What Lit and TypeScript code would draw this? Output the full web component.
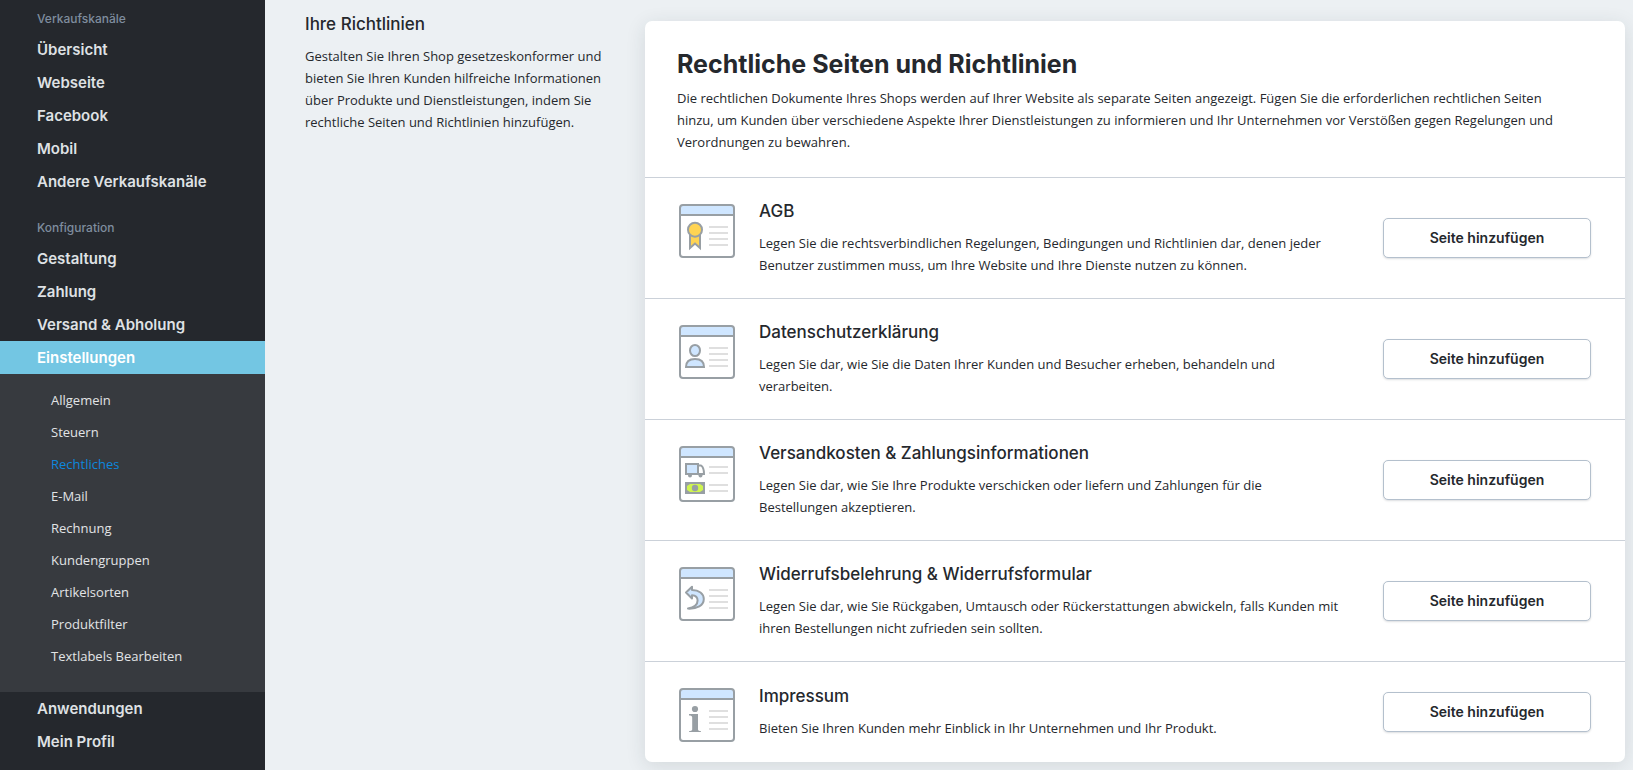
import { LitElement, html, css, svg, nothing } from "lit";
import { customElement, property } from "lit/decorators.js";
import { classMap } from "lit/directives/class-map.js";

type IconName = "terms" | "privacy" | "shipping" | "returns" | "imprint";

interface Policy {
  icon: IconName;
  title: string;
  text: string;
}

const CHANNELS = ["Übersicht", "Webseite", "Facebook", "Mobil", "Andere Verkaufskanäle"];
const CONFIG = ["Gestaltung", "Zahlung", "Versand & Abholung", "Einstellungen"];
const SETTINGS = [
  "Allgemein",
  "Steuern",
  "Rechtliches",
  "E-Mail",
  "Rechnung",
  "Kundengruppen",
  "Artikelsorten",
  "Produktfilter",
  "Textlabels Bearbeiten",
];
const ACCOUNT = ["Anwendungen", "Mein Profil"];

const POLICIES: Policy[] = [
  {
    icon: "terms",
    title: "AGB",
    text: "Legen Sie die rechtsverbindlichen Regelungen, Bedingungen und Richtlinien dar, denen jeder Benutzer zustimmen muss, um Ihre Website und Ihre Dienste nutzen zu können.",
  },
  {
    icon: "privacy",
    title: "Datenschutzerklärung",
    text: "Legen Sie dar, wie Sie die Daten Ihrer Kunden und Besucher erheben, behandeln und verarbeiten.",
  },
  {
    icon: "shipping",
    title: "Versandkosten & Zahlungsinformationen",
    text: "Legen Sie dar, wie Sie Ihre Produkte verschicken oder liefern und Zahlungen für die Bestellungen akzeptieren.",
  },
  {
    icon: "returns",
    title: "Widerrufsbelehrung & Widerrufsformular",
    text: "Legen Sie dar, wie Sie Rückgaben, Umtausch oder Rückerstattungen abwickeln, falls Kunden mit ihren Bestellungen nicht zufrieden sein sollten.",
  },
  {
    icon: "imprint",
    title: "Impressum",
    text: "Bieten Sie Ihren Kunden mehr Einblick in Ihr Unternehmen und Ihr Produkt.",
  },
];

@customElement("policy-icon")
export class PolicyIcon extends LitElement {
  @property() name: IconName = "terms";

  static styles = css`
    :host {
      display: block;
      width: 60px;
      height: 56px;
    }
    svg {
      display: block;
      width: 60px;
      height: 60px;
    }
    .line {
      stroke: #989fa4;
      stroke-width: 2;
      fill: none;
    }
    .white { fill: #fff; }
    .blue { fill: #cfe6ff; }
    .gold { fill: #ffd453; }
    .grey { fill: #989fa4; }
    .lime { fill: #cff54f; }
    .rule {
      stroke: #dfdfdf;
      stroke-width: 2;
      fill: none;
    }
  `;

  private glyph() {
    switch (this.name) {
      case "terms":
        return svg`
          <path class="line gold" d="M13 33 V48 L18 43.5 L23 48 V33" />
          <circle class="line gold" cx="18" cy="29.7" r="7" />`;
      case "privacy":
        return svg`
          <ellipse class="line blue" cx="18" cy="29.5" rx="5" ry="5.6" />
          <path class="line blue" d="M9 46 C9 40.5 12.5 38 18 38 S27 40.5 27 46 Z" />`;
      case "shipping":
        return svg`
          <path class="line blue" d="M9 22 H21 V32 H9 Z" />
          <path class="line" d="M21 23.5 H24 C26.5 25 27 27.5 27 32 H21" />
          <circle class="grey" cx="13" cy="33.4" r="2" />
          <circle class="grey" cx="23.5" cy="33.4" r="2" />
          <rect class="grey" x="8" y="40" width="20" height="12" />
          <path class="lime" d="M13 42 H23 L26 44 V48 L23 50 H13 L10 48 V44 Z" />
          <circle class="grey" cx="18" cy="46" r="3.2" />`;
      case "returns":
        return svg`
          <path class="line blue" stroke-linejoin="round"
            d="M9 29.5 L15 23.7 V27 C22 27 26.8 30.5 26.8 36 C26.8 42.500 20 46 11 45.600 C17 44.500 20.600 41.500 20.600 37.500 C20.600 34 18.500 32.400 15 32.200 V35.500 Z" />`;
      case "imprint":
        return svg`
          <circle class="grey" cx="18" cy="25" r="3.1" />
          <path class="grey" d="M12 30 H21 V45.500 C21 46.500 22.500 47 24 47.200 V48 H12 V47.200 C13.500 47 15.200 46.500 15.200 45.500 V33.500 C15.200 32 14 31.500 12 31.500 Z" />`;
    }
  }

  render() {
    const tall = this.name === "shipping";
    const rules = tall
      ? "M32 25 H51 M32 31 H51 M32 43 H51 M32 49 H51"
      : "M32 27 H51 M32 33 H51 M32 39 H51 M32 45 H51";
    return html`
      <svg viewBox="0 0 60 60" aria-hidden="true">
        <rect class="white" x="3" y="5" width="54" height=${tall ? 54 : 52} rx="3" />
        <path class="blue" d="M3 15 V8 a3 3 0 0 1 3 -3 H54 a3 3 0 0 1 3 3 V15 Z" />
        <path class="line" d="M3 15 H57" />
        <rect class="line" x="3" y="5" width="54" height=${tall ? 54 : 52} rx="3" />
        <path class="rule" d=${rules} />
        ${this.glyph()}
      </svg>
    `;
  }
}

@customElement("side-nav")
export class SideNav extends LitElement {
  static styles = css`
    :host {
      display: block;
      background: #25282d;
      font-family: Inter, "Liberation Sans", sans-serif;
    }
    nav {
      padding: 9px 0 24px;
    }
    .group {
      margin: 0;
      padding: 0 37px 5px;
      font-size: 12px;
      line-height: 19px;
      font-weight: 500;
      color: #7f8d9e;
    }
    ul {
      margin: 0;
      padding: 0;
      list-style: none;
    }
    .channels {
      padding-bottom: 20px;
    }
    .item {
      display: block;
      padding: 0 37px;
      font-size: 15px;
      line-height: 33px;
      font-weight: 600;
      color: #dfe1e4;
      text-decoration: none;
    }
    .item.active {
      background: #73c6e3;
      color: #fff;
    }
    .sub {
      padding: 10px 0 20px;
      background: #373a3f;
    }
    .subitem {
      display: block;
      padding: 0 51px;
      font-family: "Open Sans", "Noto Sans", sans-serif;
      font-size: 13px;
      line-height: 32px;
      color: #e2e4e6;
      text-decoration: none;
    }
    .subitem.active {
      color: #0d87dd;
    }
  `;

  private items(labels: string[]) {
    return labels.map((label) => {
      const active = label === "Einstellungen";
      return html`<li>
        <a class=${classMap({ item: true, active })} href="#">${label}</a>
        ${active ? this.submenu() : nothing}
      </li>`;
    });
  }

  private submenu() {
    return html`<ul class="sub">
      ${SETTINGS.map(
        (label) => html`<li>
          <a class=${classMap({ subitem: true, active: label === "Rechtliches" })} href="#">${label}</a>
        </li>`
      )}
    </ul>`;
  }

  render() {
    return html`
      <nav>
        <h2 class="group">Verkaufskanäle</h2>
        <ul class="channels">${this.items(CHANNELS)}</ul>
        <h2 class="group">Konfiguration</h2>
        <ul>${this.items(CONFIG)}</ul>
        <ul>${this.items(ACCOUNT)}</ul>
      </nav>
    `;
  }
}

@customElement("app-root")
export class AppRoot extends LitElement {
  static styles = css`
    :host {
      display: grid;
      grid-template-columns: 265px minmax(0, 1fr);
      height: 100vh;
      overflow: hidden;
      background: #ecf0f3;
      color: #25282d;
      font-family: "Open Sans", "Noto Sans", sans-serif;
      font-size: 13px;
      line-height: 22px;
    }
    main {
      display: grid;
      grid-template-columns: 308px minmax(0, 1fr);
      column-gap: 32px;
      align-items: start;
      padding: 0 8px 8px 40px;
    }
    h1,
    h2,
    h3,
    p {
      margin: 0;
    }
    h1,
    h2,
    h3,
    button {
      font-family: Inter, "Liberation Sans", sans-serif;
    }
    .about {
      padding-top: 13px;
    }
    h2,
    h3 {
      margin-bottom: 10px;
      font-size: 17px;
      line-height: 22px;
      font-weight: 500;
    }
    .card {
      margin-top: 21px;
      border-radius: 7px;
      background: #fff;
      box-shadow: 0 4px 20px rgba(37, 50, 60, 0.12);
    }
    .head {
      padding: 27px 56px 24px 32px;
    }
    h1 {
      margin-bottom: 7px;
      font-size: 25px;
      line-height: 32px;
      font-weight: 700;
    }
    .row {
      display: grid;
      grid-template-columns: 60px minmax(0, 1fr) 208px;
      align-items: center;
      padding: 22px 34px 22px 32px;
      border-top: 1px solid #cbd1d9;
    }
    policy-icon {
      align-self: start;
    }
    .info {
      padding: 0 42px 0 22px;
    }
    button {
      height: 40px;
      padding: 0 0 2px;
      border: 1px solid #b4c0cd;
      border-radius: 5px;
      background: #fff;
      box-shadow: 0 1px 2px rgba(37, 50, 60, 0.16);
      color: #25282d;
      font-size: 14px;
      font-weight: 600;
      cursor: pointer;
    }
  `;

  render() {
    return html`
      <side-nav></side-nav>
      <main>
        <section class="about">
          <h2>Ihre Richtlinien</h2>
          <p>
            Gestalten Sie Ihren Shop gesetzeskonformer und bieten Sie Ihren Kunden hilfreiche
            Informationen über Produkte und Dienstleistungen, indem Sie rechtliche Seiten und
            Richtlinien hinzufügen.
          </p>
        </section>
        <section class="card">
          <header class="head">
            <h1>Rechtliche Seiten und Richtlinien</h1>
            <p>
              Die rechtlichen Dokumente Ihres Shops werden auf Ihrer Website als separate Seiten
              angezeigt. Fügen Sie die erforderlichen rechtlichen Seiten hinzu, um Kunden über
              verschiedene Aspekte Ihrer Dienstleistungen zu informieren und Ihr Unternehmen vor
              Verstößen gegen Regelungen und Verordnungen zu bewahren.
            </p>
          </header>
          ${POLICIES.map(
            (policy) => html`
              <article class="row">
                <policy-icon name=${policy.icon}></policy-icon>
                <div class="info">
                  <h3>${policy.title}</h3>
                  <p>${policy.text}</p>
                </div>
                <button type="button">Seite hinzufügen</button>
              </article>
            `
          )}
        </section>
      </main>
    `;
  }
}
